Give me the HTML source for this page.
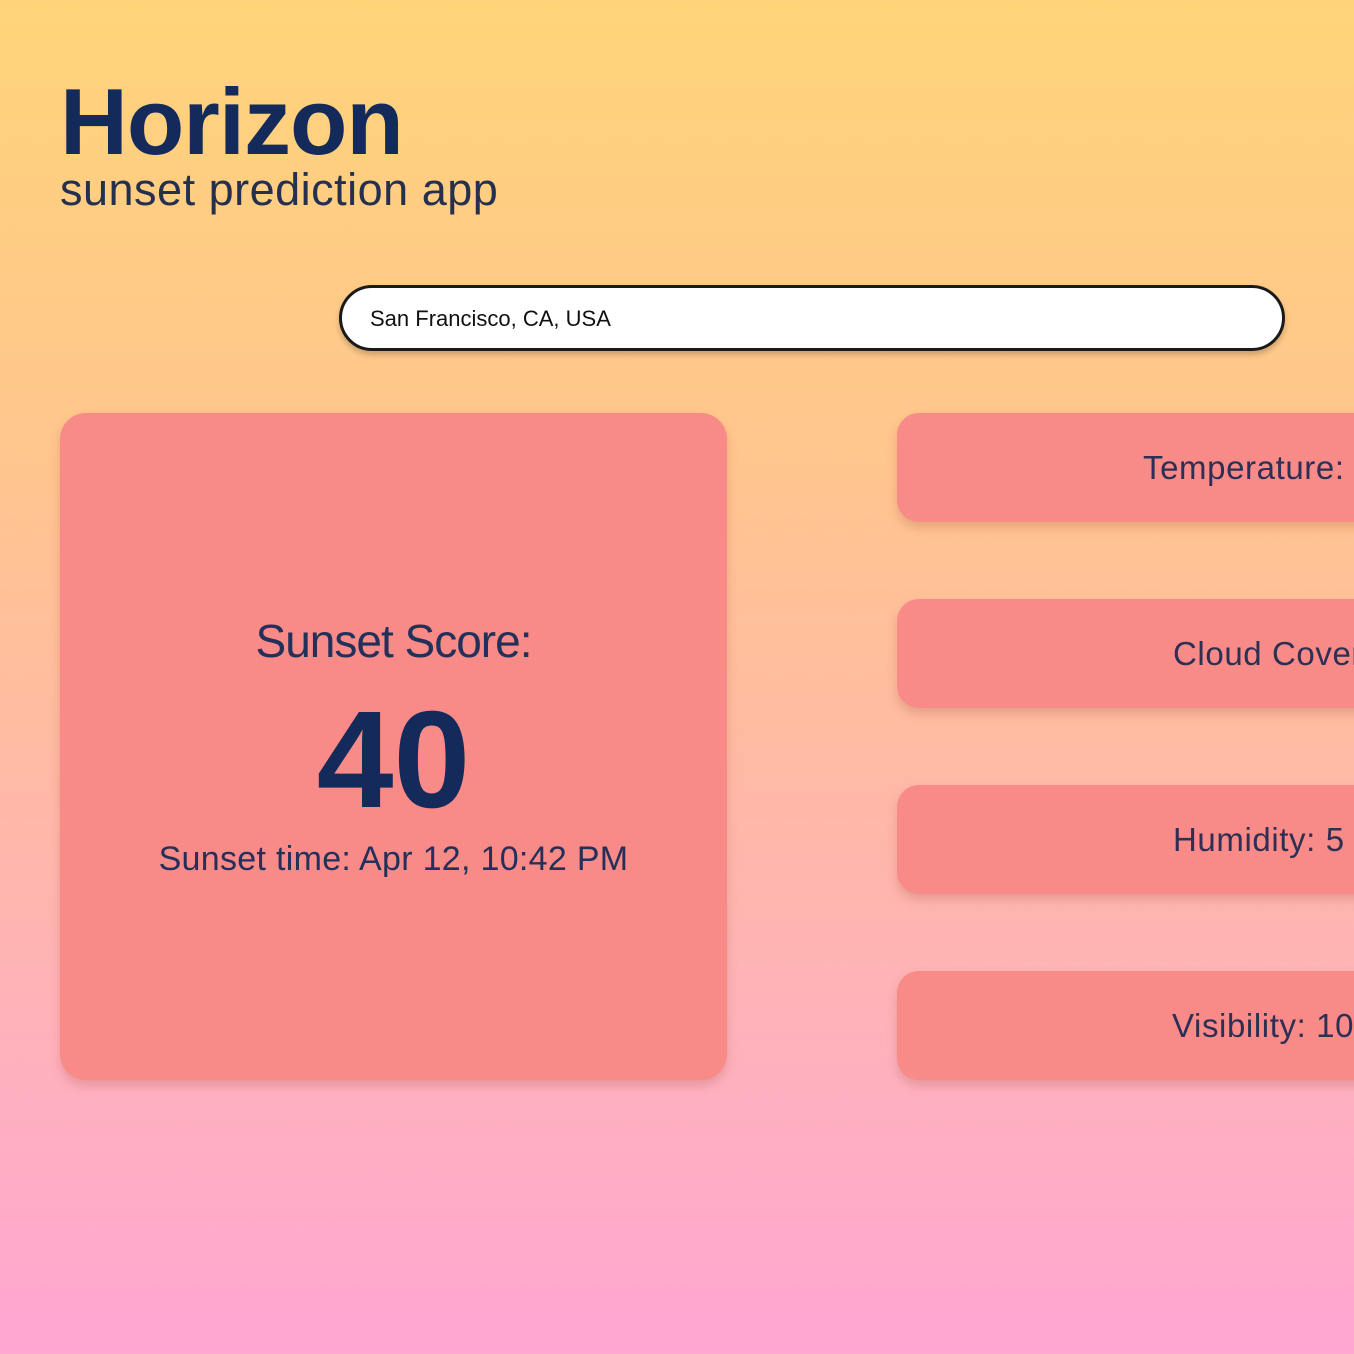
<!DOCTYPE html>
<html><head><meta charset="utf-8"><style>
html,body{margin:0;padding:0;}
body{width:1354px;height:1354px;overflow:hidden;position:relative;font-family:"Liberation Sans",sans-serif;color:#1a2b57;
background:linear-gradient(180deg,#ffd479 0%,#ffc58f 35%,#ffb8a8 60%,#ffb0bf 80%,#ffa6d2 100%);}
.t{position:absolute;white-space:nowrap;}
.card{position:absolute;background:#f88a88;box-shadow:0 6px 10px rgba(160,80,60,0.25);}
.side{left:897px;width:520px;height:109px;border-radius:22px;}
.side span{position:absolute;top:50%;transform:translateY(-50%);font-size:33px;color:#2e2f55;white-space:nowrap;letter-spacing:0.6px;}
</style></head><body>
<div class="t" style="left:60px;top:68px;font-size:94px;font-weight:bold;color:#132a5a;letter-spacing:-1px;">Horizon</div>
<div class="t" style="left:60px;top:164px;font-size:45px;color:#25304f;letter-spacing:0.5px;">sunset prediction app</div>
<div style="position:absolute;left:339px;top:285px;width:940px;height:60px;border:3px solid #1a1a1a;border-radius:33px;background:#fff;box-shadow:0 4px 6px rgba(0,0,0,0.2);"></div>
<div class="t" style="left:370px;top:306px;font-size:22px;color:#111;letter-spacing:0px;">San Francisco, CA, USA</div>
<div class="card" style="left:60px;top:413px;width:667px;height:667px;border-radius:26px;"></div>
<div class="t" style="left:60px;width:667px;text-align:center;top:614px;font-size:46px;color:#22305a;letter-spacing:-1px;">Sunset Score:</div>
<div class="t" style="left:60px;width:667px;text-align:center;top:681px;font-size:138px;font-weight:bold;color:#132a5a;letter-spacing:0px;">40</div>
<div class="t" style="left:60px;width:667px;text-align:center;top:840px;font-size:34px;color:#25305a;letter-spacing:0.3px;">Sunset time: Apr 12, 10:42 PM</div>
<div class="card side" style="top:413px;"><span style="left:246px;">Temperature:</span></div>
<div class="card side" style="top:599px;"><span style="left:276px;">Cloud Cover</span></div>
<div class="card side" style="top:785px;"><span style="left:276px;">Humidity: 5</span></div>
<div class="card side" style="top:971px;"><span style="left:275px;">Visibility: 10</span></div>
</body></html>
